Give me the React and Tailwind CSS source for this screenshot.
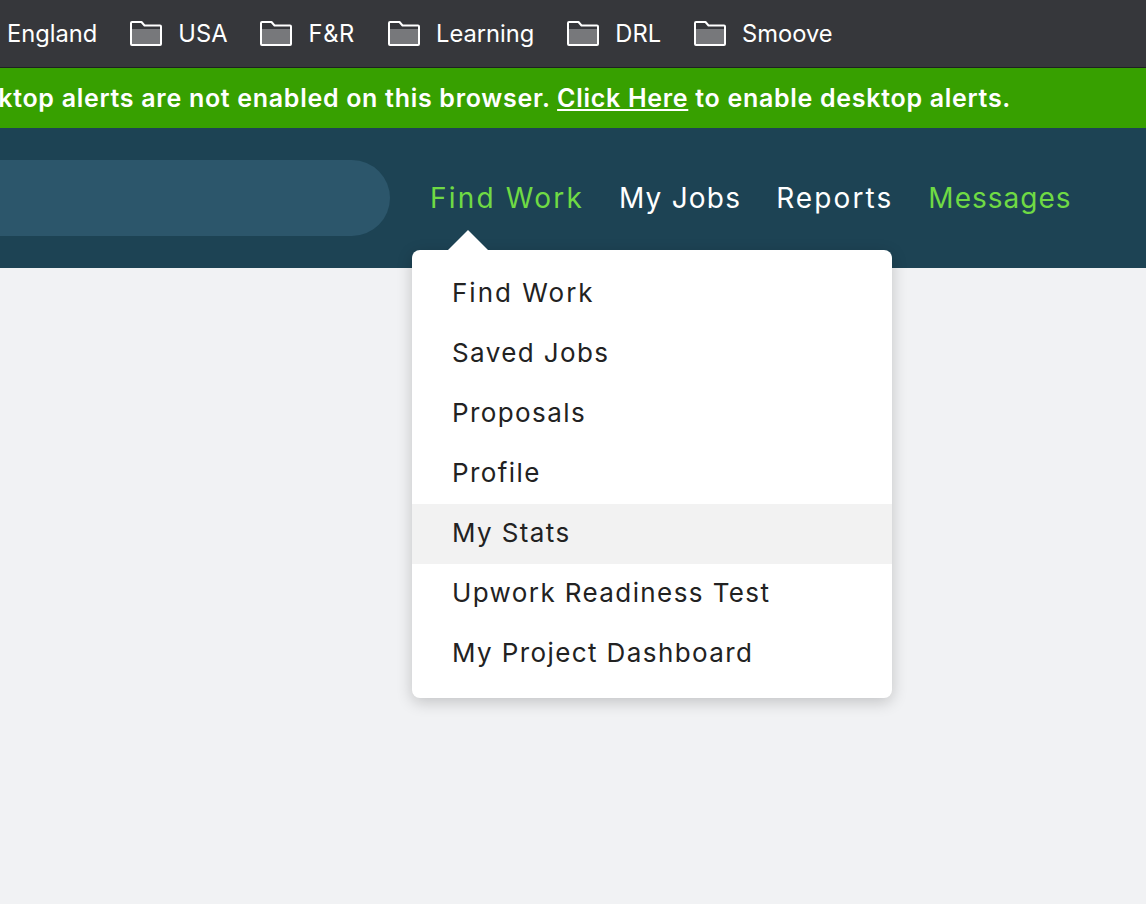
import React from "react";

const bookmarks = ["USA", "F&R", "Learning", "DRL", "Smoove"];
const menuItems = ["Find Work", "Saved Jobs", "Proposals", "Profile", "My Stats", "Upwork Readiness Test", "My Project Dashboard"];

function FolderIcon() {
    return (
        <svg width="34" height="27" viewBox="0 0 34 27" className="shrink-0">
            <path d="M2 9h30v15a1 1 0 0 1-1 1H3a1 1 0 0 1-1-1z" fill="#77787b" />
            <path d="M3 2h9.5l3 3.5H31a1 1 0 0 1 1 1V24a1 1 0 0 1-1 1H3a1 1 0 0 1-1-1V3a1 1 0 0 1 1-1z" fill="none" stroke="#fff" strokeWidth="2" strokeLinejoin="round" />
        </svg>
    );
}

export default function App() {
    return (
        <div className="relative h-[904px] w-[1146px] overflow-hidden bg-[#f1f2f4] font-['Inter','Liberation_Sans',sans-serif]">
            {/* Browser bookmarks bar */}
            <div className="flex h-[68px] items-center border-b border-[#1f2023] bg-[#36373b] pl-[7px] text-[23.7px] text-white">
                <span className="mr-[32px]">England</span>
                {bookmarks.map((name) => (
                    <div key={name} className="mr-[32px] flex items-center gap-[15px]">
                        <FolderIcon />
                        <span className={name === "F&R" ? "tracking-[0.7px]" : ""}>{name}</span>
                    </div>
                ))}
            </div>

            {/* Alert banner */}
            <div className="flex h-[60px] items-center justify-end overflow-hidden whitespace-nowrap bg-[#37a000] pr-[135px] pt-[1px] text-[25px] font-semibold tracking-[0.7px] text-white">
                <span>Desktop alerts are not enabled on this browser. <u>Click Here</u> to enable desktop alerts.</span>
            </div>

            {/* Main nav */}
            <div className="flex h-[140px] items-start bg-[#1d4354] pt-[32px] text-[28px] text-white">
                <div className="h-[76px] w-[390px] rounded-r-[38px] bg-[#2c566b]" />
                <div className="ml-[40px] flex h-[76px] items-center gap-[35px]">
                    <span className="tracking-[2.2px] text-[#6fda44]">Find Work</span>
                    <span className="tracking-[1.2px]">My Jobs</span>
                    <span className="tracking-[2.1px]">Reports</span>
                    <span className="tracking-[1px] text-[#6fda44]">Messages</span>
                </div>
            </div>

            {/* Dropdown menu */}
            <div className="absolute left-[412px] top-[250px] w-[480px] rounded-lg bg-white py-[14px] text-[26px] tracking-[1.4px] text-[#222222] shadow-[0_4px_16px_rgba(0,0,0,0.2)]">
                <div className="absolute -top-[20px] left-[35px] h-0 w-0 border-x-[21px] border-b-[21px] border-x-transparent border-b-white" />
                {menuItems.map((item) => (
                    <div key={item} className={item === "My Stats" ? "flex h-[60px] items-center bg-[#f2f2f2] px-10 pb-[3px]" : "flex h-[60px] items-center px-10 pb-[3px]"}>
                        <span className={item === "Find Work" ? "tracking-[2px]" : ""}>{item}</span>
                    </div>
                ))}
            </div>
        </div>
    );
}
